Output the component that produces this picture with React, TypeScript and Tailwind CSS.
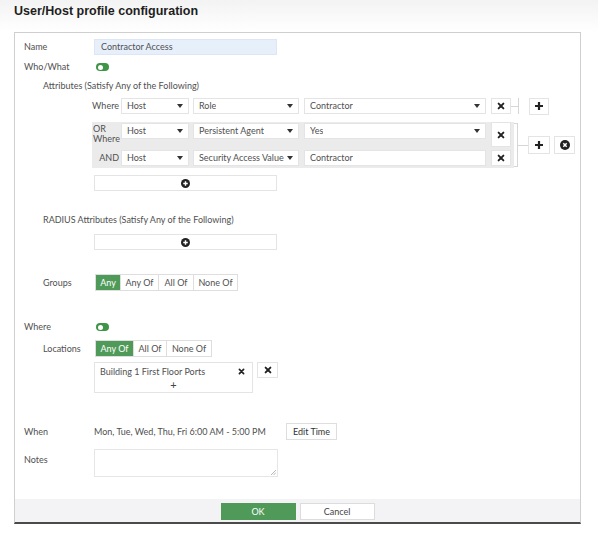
import React from 'react';

const Arrow = () => (
  <svg width="6" height="4" viewBox="0 0 6 4" className="shrink-0">
    <path d="M0 0 L6 0 L3 4 Z" fill="#333" />
  </svg>
);

const XIcon = ({ size = 8 }: { size?: number }) => (
  <svg width={size} height={size} viewBox="0 0 10 10">
    <path d="M2 2 L8 8 M8 2 L2 8" stroke="#222" strokeWidth="2.4" strokeLinecap="round" />
  </svg>
);

const PlusIcon = () => (
  <svg width="10" height="10" viewBox="0 0 10 10">
    <path d="M5 1 V9 M1 5 H9" stroke="#222" strokeWidth="2.2" />
  </svg>
);

const CirclePlus = () => (
  <svg width="9" height="9" viewBox="0 0 10 10">
    <circle cx="5" cy="5" r="5" fill="#222" />
    <path d="M5 2.5 V7.5 M2.5 5 H7.5" stroke="#fff" strokeWidth="1.6" />
  </svg>
);

const CircleX = () => (
  <svg width="10" height="10" viewBox="0 0 10 10">
    <circle cx="5" cy="5" r="5" fill="#222" />
    <path d="M3.3 3.3 L6.7 6.7 M6.7 3.3 L3.3 6.7" stroke="#fff" strokeWidth="1.5" />
  </svg>
);

const Toggle = () => (
  <div className="w-[13px] h-[8px] rounded-full bg-[#3f9447] flex items-center pl-[2px]">
    <div className="w-[5px] h-[5px] rounded-full bg-white" />
  </div>
);

function Select({ w, text }: { w: string; text: string }) {
  return (
    <div className={`${w} h-[16px] bg-white border border-[#e4e4e4] flex items-center justify-between pl-[5px] pr-[5px] shrink-0`}>
      <span className="truncate">{text}</span>
      <Arrow />
    </div>
  );
}

function Box({ w, text }: { w: string; text: string }) {
  return (
    <div className={`${w} h-[16px] bg-white border border-[#e4e4e4] flex items-center pl-[5px] shrink-0`}>
      {text}
    </div>
  );
}

function Seg({ items, active }: { items: { label: string; w: string }[]; active: number }) {
  return (
    <div className="flex h-[17px]">
      {items.map((it, i) => (
        <div
          key={it.label}
          className={`${it.w} flex items-center justify-center border border-[#dedede] -ml-px first:ml-0 ${
            i === active ? 'bg-[#4f9a58] text-white border-[#4f9a58]' : 'bg-white'
          }`}
        >
          {it.label}
        </div>
      ))}
    </div>
  );
}

export default function App() {
  return (
    <div
      className="w-[598px] h-[546px] bg-white text-[9px] text-[#505050] relative"
      style={{ fontFamily: 'Lato, "Noto Sans", sans-serif' }}
    >
      {/* header */}
      <div className="h-[32px] pl-[14px] pt-[4px] bg-gradient-to-b from-[#f3f3f3] to-white">
        <div
          className="text-[12.5px] font-bold text-[#1e1e1e] leading-[14px]"
          style={{ fontFamily: '"Liberation Sans", Arial, sans-serif' }}
        >
          User/Host profile configuration
        </div>
      </div>

      {/* panel */}
      <div className="ml-[14px] w-[567px] border border-[#cfcfcf] border-b-2 border-b-[#4a4a4a] bg-white">
        {/* Name */}
        <div className="mt-[6px] pl-[9px] flex items-center h-[16px]">
          <div className="w-[70px]">Name</div>
          <div className="w-[183px] h-[16px] bg-[#e7effb] border border-[#dde6f4] flex items-center pl-[6px]">
            Contractor Access
          </div>
        </div>

        {/* Who/What */}
        <div className="mt-[5px] pl-[9px] flex items-center h-[14px]">
          <div className="w-[70px]">Who/What</div>
          <div className="pl-[2px]">
            <Toggle />
          </div>
        </div>

        <div className="mt-[6px] pl-[28px] h-[12px] flex items-center">Attributes (Satisfy Any of the Following)</div>

        {/* Row 1 */}
        <div className="mt-[6px] ml-[77px] flex items-center h-[16px]">
          <div className="w-[29px] text-right pr-[2px]">Where</div>
          <Select w="w-[68px]" text="Host" />
          <div className="w-[4px]" />
          <Select w="w-[106px]" text="Role" />
          <div className="w-[5px]" />
          <Select w="w-[182px]" text="Contractor" />
          <div className="w-[5px]" />
          <div className="w-[20px] h-[16px] bg-white border border-[#e4e4e4] flex items-center justify-center">
            <XIcon />
          </div>
          <div className="w-[7px] border-t border-[#d6d6d6]" />
          <div className="w-px h-[16px] bg-[#d6d6d6]" />
          <div className="w-[10px]" />
          <div className="w-[20px] h-[17px] bg-white border border-[#e4e4e4] flex items-center justify-center">
            <PlusIcon />
          </div>
        </div>

        {/* Group */}
        <div className="mt-[8px] ml-[77px] flex items-stretch">
          <div className="w-[422px] bg-[#ebebeb] pb-[2px]">
            <div className="flex h-[25px]">
              <div className="w-[29px] pl-[1px] pt-[2px] leading-[10px]">
                <div>OR</div>
                <div>Where</div>
              </div>
              <div className="pt-[1px] flex">
                <Select w="w-[68px]" text="Host" />
                <div className="w-[4px]" />
                <Select w="w-[106px]" text="Persistent Agent" />
                <div className="w-[5px]" />
                <Select w="w-[182px]" text="Yes" />
              </div>
              <div className="w-[5px]" />
              <div className="w-[20px] h-[25px] bg-white border border-[#e4e4e4] flex items-center justify-center">
                <XIcon />
              </div>
            </div>
            <div className="flex h-[16px] mt-[3px] items-center">
              <div className="w-[29px] text-right pr-[2px]">AND</div>
              <Select w="w-[68px]" text="Host" />
              <div className="w-[4px]" />
              <Select w="w-[106px]" text="Security Access Value" />
              <div className="w-[5px]" />
              <Box w="w-[182px]" text="Contractor" />
              <div className="w-[5px]" />
              <div className="w-[20px] h-[16px] bg-white border border-[#e4e4e4] flex items-center justify-center">
                <XIcon />
              </div>
            </div>
          </div>
          <div className="w-[4px] my-[1px] border-t border-b border-r border-[#d6d6d6]" />
          <div className="flex items-center">
            <div className="w-[10px] border-t border-[#d6d6d6]" />
            <div className="w-[22px] h-[18px] bg-white border border-[#e4e4e4] flex items-center justify-center">
              <PlusIcon />
            </div>
            <div className="w-[4px]" />
            <div className="w-[21px] h-[18px] bg-white border border-[#e4e4e4] flex items-center justify-center">
              <CircleX />
            </div>
          </div>
        </div>

        {/* add attribute */}
        <div className="mt-[7px] ml-[79px] w-[183px] h-[16px] border border-[#e4e4e4] flex items-center justify-center">
          <CirclePlus />
        </div>

        <div className="mt-[23px] pl-[28px] h-[12px] flex items-center">RADIUS Attributes (Satisfy Any of the Following)</div>

        <div className="mt-[8px] ml-[79px] w-[183px] h-[16px] border border-[#e4e4e4] flex items-center justify-center">
          <CirclePlus />
        </div>

        {/* Groups */}
        <div className="mt-[24px] pl-[28px] flex items-center">
          <div className="w-[52px]">Groups</div>
          <Seg
            active={0}
            items={[
              { label: 'Any', w: 'w-[26px]' },
              { label: 'Any Of', w: 'w-[39px]' },
              { label: 'All Of', w: 'w-[36px]' },
              { label: 'None Of', w: 'w-[45px]' },
            ]}
          />
        </div>

        {/* Where */}
        <div className="mt-[29px] pl-[9px] flex items-center h-[14px]">
          <div className="w-[70px]">Where</div>
          <div className="pl-[2px]">
            <Toggle />
          </div>
        </div>

        {/* Locations */}
        <div className="mt-[6px] pl-[28px] flex items-center">
          <div className="w-[52px]">Locations</div>
          <Seg
            active={0}
            items={[
              { label: 'Any Of', w: 'w-[39px]' },
              { label: 'All Of', w: 'w-[34px]' },
              { label: 'None Of', w: 'w-[46px]' },
            ]}
          />
        </div>

        <div className="mt-[5px] ml-[79px] flex items-start">
          <div className="w-[159px] h-[31px] border border-[#e4e4e4] flex flex-col">
            <div className="flex items-center justify-between pl-[5px] pr-[7px] h-[16px] pt-[1px]">
              <span>Building 1 First Floor Ports</span>
              <XIcon size={7} />
            </div>
            <div className="text-center text-[11px] leading-[12px] text-[#444]">+</div>
          </div>
          <div className="w-[4px]" />
          <div className="w-[21px] h-[16px] border border-[#e4e4e4] flex items-center justify-center">
            <XIcon />
          </div>
        </div>

        {/* When */}
        <div className="mt-[30px] pl-[9px] flex items-center h-[17px]">
          <div className="w-[70px]">When</div>
          <div className="w-[192px]">Mon, Tue, Wed, Thu, Fri 6:00 AM - 5:00 PM</div>
          <div className="w-[51px] h-[17px] border border-[#dedede] flex items-center justify-center text-[#333]">
            Edit Time
          </div>
        </div>

        {/* Notes */}
        <div className="mt-[9px] pl-[9px] flex items-start">
          <div className="w-[70px] pt-[4px]">Notes</div>
          <div className="w-[184px] h-[28px] border border-[#e6e6e6] relative">
            <svg width="5" height="5" viewBox="0 0 5 5" className="absolute right-[1px] bottom-[1px]">
              <path d="M5 0 L0 5 M5 2.5 L2.5 5" stroke="#999" strokeWidth="0.7" />
            </svg>
          </div>
        </div>

        {/* footer */}
        <div className="mt-[22px] h-[23px] bg-[#f3f3f5] flex justify-center pt-[4px] gap-[4px]">
          <div className="w-[75px] h-[17px] bg-[#4f9a58] text-white flex items-center justify-center text-[9px]">OK</div>
          <div className="w-[75px] h-[17px] bg-white border border-[#dcdcdc] flex items-center justify-center text-[#444]">
            Cancel
          </div>
        </div>
      </div>
    </div>
  );
}
